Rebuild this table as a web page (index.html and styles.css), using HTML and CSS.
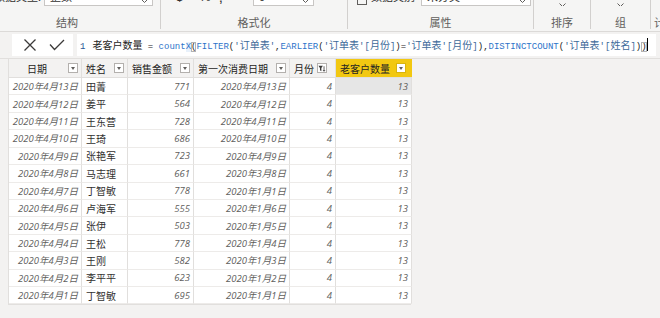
FILE: index.html
```html
<!DOCTYPE html>
<html lang="zh">
<head>
<meta charset="utf-8">
<title>老客户数量</title>
<link rel="stylesheet" href="styles.css">
</head>
<body>
<div class="ribbon">
  <div class="grp g1">
    <div class="ctl">
      <span class="rlbl l1">数据类型:</span>
      <span class="dd dd1"><span>整数</span><svg class="chev" width="7" height="4" viewBox="0 0 7 4"><polyline points="0.5,0.5 3.5,3.5 6.5,0.5"/></svg></span>
    </div>
    <div class="glabel gl1">结构</div>
  </div>
  <div class="grp g2">
    <div class="ctl">
      <span class="sym s1">$</span><span class="sym s2">▾</span><span class="sym s3">%</span><span class="sym s4">,</span><span class="sym s5">.00</span>
      <span class="dd dd2"><span>0</span><svg class="chev" width="7" height="4" viewBox="0 0 7 4"><polyline points="0.5,0.5 3.5,3.5 6.5,0.5"/></svg></span>
    </div>
    <div class="glabel">格式化</div>
  </div>
  <div class="grp g3">
    <div class="ctl">
      <span class="ico"></span>
      <span class="rlbl">数据类别</span>
      <span class="dd dd3"><span>未分类</span><svg class="chev" width="7" height="4" viewBox="0 0 7 4"><polyline points="0.5,0.5 3.5,3.5 6.5,0.5"/></svg></span>
    </div>
    <div class="glabel">属性</div>
  </div>
  <div class="grp g4">
    <div class="ctl center"><svg class="chev" width="7" height="4" viewBox="0 0 7 4"><polyline points="0.5,0.5 3.5,3.5 6.5,0.5"/></svg></div>
    <div class="glabel">排序</div>
  </div>
  <div class="grp g5">
    <div class="ctl center"><svg class="chev" width="7" height="4" viewBox="0 0 7 4"><polyline points="0.5,0.5 3.5,3.5 6.5,0.5"/></svg></div>
    <div class="glabel">组</div>
  </div>
  <div class="grp g6">
    <div class="ctl"></div>
    <div class="glabel gl6">计算</div>
  </div>
</div>

<div class="fbar">
  <div class="fbtns">
    <svg width="14" height="14" viewBox="0 0 14 14" class="xicon"><path d="M1.5 1.5 L12.5 12.5 M12.5 1.5 L1.5 12.5"/></svg>
    <svg width="16" height="12" viewBox="0 0 16 12" class="ok"><path d="M1 5.5 L5.5 10.5 L15 1"/></svg>
  </div>
  <div class="code"><span class="ln">1</span><span class="cj">老客户数量</span> = <span class="fn">count<span class="cx">X</span></span><span class="br">(</span><span class="fn">FILTER</span>(<span class="tb">'<span class="cj">订单表</span>'</span>,<span class="fn">EARLIER</span>(<span class="tb">'<span class="cj">订单表</span>'[<span class="cj">月份</span>]</span>)=<span class="tb">'<span class="cj">订单表</span>'[<span class="cj">月份</span>]</span>),<span class="fn">DISTINCTCOUNT</span>(<span class="tb">'<span class="cj">订单表</span>'[<span class="cj">姓名</span>]</span>)<span class="br">)</span><span class="caret"></span></div>
</div>

<div class="grid">
  <div class="h hc">日期<span class="btn"></span></div>
  <div class="h">姓名<span class="btn"></span></div>
  <div class="h">销售金额<span class="btn"></span></div>
  <div class="h">第一次消费日期<span class="btn"></span></div>
  <div class="h">月份<span class="btn fbtn"><svg width="9" height="9" viewBox="0 0 9 9"><path d="M0.5 1.5 H5.5 L3.8 4 V7.5 L2.2 6.5 V4 Z" fill="#3b3a39"/><path d="M6.8 2 V7.5 M5.6 6.2 L6.8 7.6 L8 6.2" stroke="#3b3a39" fill="none" stroke-width="0.9"/></svg></span></div>
  <div class="h hy">老客户数量<span class="btn"></span></div>

  <div class="c n">2020年4月13日</div><div class="c t">田菁</div><div class="c n">771</div><div class="c n">2020年4月13日</div><div class="c n">4</div><div class="c n sel">13</div>
  <div class="c n">2020年4月12日</div><div class="c t">姜平</div><div class="c n">564</div><div class="c n">2020年4月12日</div><div class="c n">4</div><div class="c n">13</div>
  <div class="c n">2020年4月11日</div><div class="c t">王东营</div><div class="c n">728</div><div class="c n">2020年4月11日</div><div class="c n">4</div><div class="c n">13</div>
  <div class="c n">2020年4月10日</div><div class="c t">王琦</div><div class="c n">686</div><div class="c n">2020年4月10日</div><div class="c n">4</div><div class="c n">13</div>
  <div class="c n">2020年4月9日</div><div class="c t">张艳军</div><div class="c n">723</div><div class="c n">2020年4月9日</div><div class="c n">4</div><div class="c n">13</div>
  <div class="c n">2020年4月8日</div><div class="c t">马志理</div><div class="c n">661</div><div class="c n">2020年3月8日</div><div class="c n">4</div><div class="c n">13</div>
  <div class="c n">2020年4月7日</div><div class="c t">丁智敏</div><div class="c n">778</div><div class="c n">2020年1月1日</div><div class="c n">4</div><div class="c n">13</div>
  <div class="c n">2020年4月6日</div><div class="c t">卢海军</div><div class="c n">555</div><div class="c n">2020年1月6日</div><div class="c n">4</div><div class="c n">13</div>
  <div class="c n">2020年4月5日</div><div class="c t">张伊</div><div class="c n">503</div><div class="c n">2020年1月5日</div><div class="c n">4</div><div class="c n">13</div>
  <div class="c n">2020年4月4日</div><div class="c t">王松</div><div class="c n">778</div><div class="c n">2020年1月4日</div><div class="c n">4</div><div class="c n">13</div>
  <div class="c n">2020年4月3日</div><div class="c t">王刚</div><div class="c n">582</div><div class="c n">2020年1月3日</div><div class="c n">4</div><div class="c n">13</div>
  <div class="c n">2020年4月2日</div><div class="c t">李平平</div><div class="c n">623</div><div class="c n">2020年1月2日</div><div class="c n">4</div><div class="c n">13</div>
  <div class="c n">2020年4月1日</div><div class="c t">丁智敏</div><div class="c n">695</div><div class="c n">2020年1月1日</div><div class="c n">4</div><div class="c n">13</div>
</div>
</body>
</html>
```

FILE: styles.css
```css
* { box-sizing: border-box; margin: 0; padding: 0; }
html, body { width: 660px; height: 318px; overflow: hidden; }
body {
  background: #f3f2f1;
  font-family: "Noto Sans CJK SC", "Noto Sans", sans-serif;
  color: #252423;
}

/* ribbon */
.ribbon {
  height: 32px;
  display: flex;
  background: #f5f5f4;
  border-bottom: 1px solid #dcdad8;
}
.grp {
  display: flex;
  flex-direction: column;
  height: 29px;
  border-right: 1px solid #d2d0ce;
}
.g1 { width: 161px; }
.g2 { width: 187px; }
.g3 { width: 186px; }
.g4 { width: 57px; }
.g5 { width: 60px; }
.g6 { flex: 1; border-right: none; overflow: hidden; }
.ctl {
  height: 9px;
  overflow: hidden;
  display: flex;
  align-items: flex-end;
  font-size: 11px;
  color: #323130;
}
.ctl.center { justify-content: center; align-items: center; padding-top: 3px; }
.rlbl { white-space: nowrap; line-height: 20px; }
.l1 { margin-left: -6px; }
.dd {
  height: 20px;
  background: #fff;
  border: 1px solid #c8c6c4;
  display: flex;
  align-items: center;
  justify-content: space-between;
  padding: 0 4px 0 5px;
  font-size: 11px;
  line-height: 18px;
}
.dd1 { width: 109px; margin-left: 3px; }
.dd2 { width: 61px; margin-left: 10px; }
.dd3 { width: 110px; margin-left: 6px; }
.chev { fill: none; stroke: #605e5c; stroke-width: 1; align-self: flex-end; margin-bottom: 2px; }
.ctl.center .chev { align-self: center; margin: 0; }
.sym { font-family: "Liberation Sans", sans-serif; font-size: 13px; line-height: 18px; color: #323130; }
.s1 { margin-left: 15px; }
.s2 { margin-left: 6px; font-size: 10px; }
.s3 { margin-left: 5px; }
.s4 { margin-left: 8px; font-size: 15px; }
.s5 { margin-left: 6px; color: #2b79c2; font-size: 10px; }
.ico {
  width: 10px; height: 18px;
  border: 1px solid #605e5c;
  margin-left: 9px; margin-right: 4px;
  margin-bottom: 1px;
}
.glabel {
  flex: 1;
  text-align: center;
  font-size: 11px;
  line-height: 14px;
  padding-top: 9px;
  color: #605e5c;
  white-space: nowrap;
}
.gl1 { padding-right: 26px; }
.gl6 { text-align: left; padding-left: 3px; }

/* formula bar */
.fbar {
  height: 27px;
  display: flex;
  gap: 4px;
  padding: 2px 4px 0 12px;
  border-bottom: 1px solid #e1dfdd;
}
.fbtns {
  width: 61px;
  height: 22px;
  background: #fff;
  display: flex;
  align-items: center;
  gap: 12px;
  padding-left: 11px;
}
.xicon path { stroke: #3b3a39; stroke-width: 1.3; fill: none; }
.ok path { stroke: #3b3a39; stroke-width: 1.3; fill: none; }
.code {
  flex: 1;
  height: 22px;
  background: #fff;
  padding-left: 3px;
  font-family: "Liberation Mono", monospace;
  font-size: 9px;
  line-height: 22px;
  white-space: nowrap;
  overflow: hidden;
  color: #252423;
}
.code .cj { font-family: "Noto Sans CJK SC", sans-serif; font-size: 10px; }
.ln { color: #2b5797; margin-right: 7px; }
.fn { color: #2d73c9; }
.tb { color: #3d6a9a; }
.cx { background: #e8f1fb; }
.br { outline: 1px solid #b4b4b4; outline-offset: -1px; }
.caret {
  display: inline-block;
  width: 1px; height: 13px;
  background: #000;
  vertical-align: -2px;
}

/* table */
.grid {
  margin-left: 8px;
  width: 403px;
  display: grid;
  grid-template-columns: 73px 46px 66px 96px 46px 76px;
  grid-template-rows: 19px repeat(13, 17.43px);
  border-left: 1px solid #e1dfdd;
  border-bottom: 1px solid #e1dfdd;
}
.h {
  display: flex;
  align-items: center;
  padding-left: 4px;
  font-size: 10px;
  color: #252423;
  border-right: 1px solid #e1dfdd;
  border-bottom: 1px solid #e1dfdd;
  white-space: nowrap;
}
.hc { padding-left: 18px; }
.hy { background: #f2c811; border-right: none; }
.btn {
  margin-left: auto;
  margin-right: 3px;
  width: 10px;
  height: 10px;
  background: #fff;
  border: 1px solid #b3b0ad;
  position: relative;
  display: flex;
  align-items: center;
  justify-content: center;
}
.btn::after {
  content: "";
  border-left: 2.5px solid transparent;
  border-right: 2.5px solid transparent;
  border-top: 3px solid #605e5c;
}
.fbtn { margin-right: 8px; }
.fbtn::after { display: none; }
.hy .btn { margin-right: 6px; border-color: #d9b40e; }
.c {
  background: #fff;
  border-right: 1px solid #e1dfdd;
  border-bottom: 1px solid #edebe9;
  display: flex;
  align-items: center;
  white-space: nowrap;
  overflow: hidden;
}
.c.n {
  justify-content: flex-end;
  padding-right: 3px;
  font-family: "Open Sans", "Noto Sans CJK SC", sans-serif;
  font-style: italic;
  font-size: 9.5px;
  color: #605e5c;
}
.c.t {
  padding-left: 4px;
  font-size: 10px;
  color: #323130;
}
.c.sel { background: #e6e6e6; }
```
